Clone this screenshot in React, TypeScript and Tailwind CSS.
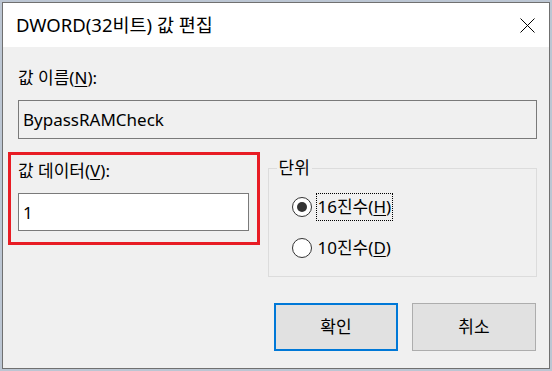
import { useState } from "react";

function Radio({ checked, label, mnemonic, focused, onClick }: { checked: boolean; label: string; mnemonic: string; focused?: boolean; onClick: () => void })
{
    return (
        <div className="flex items-center h-[28px] cursor-default" onClick={onClick}>
            <div className="w-[20px] h-[20px] rounded-full border border-[#333333] bg-white flex items-center justify-center">
                {checked && <div className="w-[10px] h-[10px] rounded-full bg-[#333333]" />}
            </div>
            <div className={"ml-[4px] px-[1px] h-[28px] flex items-center border border-dotted " + (focused ? "border-black" : "border-transparent")}>
                {label}(<span className="underline underline-offset-2">{mnemonic}</span>)
            </div>
        </div>
    );
}

export default function App()
{
    const [hex, setHex] = useState(true);
    const [value, setValue] = useState("1");

    return (
        <div className="w-[552px] h-[371px] bg-[#bcc6d3] p-[2px] font-['Noto_Sans','Noto_Sans_CJK_KR',sans-serif] text-[17px] text-black">
            <div className="w-full h-full border border-[#707070] flex flex-col bg-[#f0f0f0]">
                <div className="h-[44px] bg-white flex items-center justify-between pl-[13px] pr-[14px] shrink-0">
                    <span className="text-[18.5px]">DWORD(32비트) 값 편집</span>
                    <svg width="15" height="15" viewBox="0 0 15 15">
                        <path d="M0.5 0.5 L14.5 14.5 M14.5 0.5 L0.5 14.5" stroke="#000" strokeWidth="1" fill="none" />
                    </svg>
                </div>

                <div className="flex flex-col pl-[15px] pr-[12px] pt-[20px]">
                    <div className="h-[22px] leading-[22px]">
                        값 이름(<span className="underline underline-offset-2">N</span>):
                    </div>
                    <div className="mt-[11px] h-[39px] border border-[#7a7a7a] bg-[#f0f0f0] flex items-center px-[4px]">
                        BypassRAMCheck
                    </div>

                    <div className="flex mt-[13px]">
                        <div className="-ml-[10px] w-[252px] h-[93px] border-[3px] border-[#e81c24] pl-[7px] pt-[5px]">
                            <div className="h-[22px] leading-[22px]">
                                값 데이터(<span className="underline underline-offset-2">V</span>):
                            </div>
                            <input
                                value={value}
                                onChange={(e) => setValue(e.target.value)}
                                className="mt-[11px] w-[231px] h-[38px] border border-[#7a7a7a] bg-white px-[4px] outline-none"
                            />
                        </div>

                        <fieldset className="ml-[8px] mt-[5px] w-[270px] h-[120px] border border-[#dcdcdc] px-0 pb-0">
                            <legend className="ml-[8px] px-[2px] leading-[22px]">단위</legend>
                            <div className="pl-[23px] pt-[14px] flex flex-col gap-[13px]">
                                <Radio checked={hex} label="16진수" mnemonic="H" focused onClick={() => setHex(true)} />
                                <Radio checked={!hex} label="10진수" mnemonic="D" onClick={() => setHex(false)} />
                            </div>
                        </fieldset>
                    </div>

                    <div className="flex justify-end gap-[14px] mt-[26px] pr-[1px]">
                        <button className="w-[124px] h-[48px] bg-[#e1e1e1] border-2 border-[#0078d7]">확인</button>
                        <button className="w-[124px] h-[48px] bg-[#e1e1e1] border border-[#adadad]">취소</button>
                    </div>
                </div>
            </div>
        </div>
    );
}
